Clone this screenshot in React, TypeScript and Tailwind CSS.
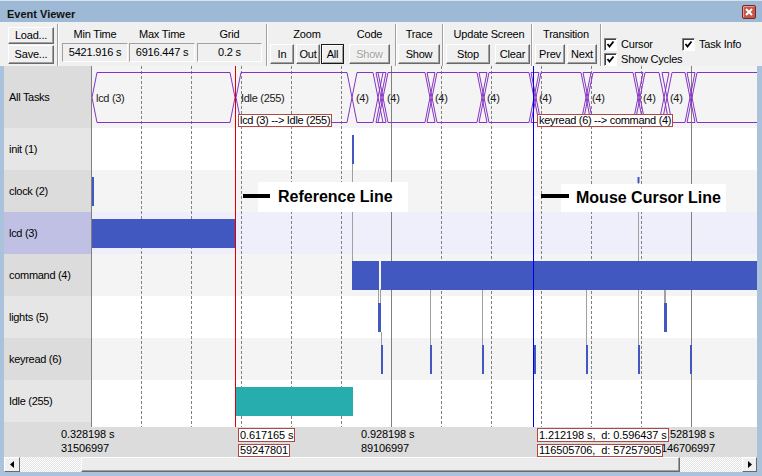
import type { ReactNode } from "react";

const BAR = "#4158c0";
const TEAL = "#27adad";
const PURPLE = "#8433c4";
const FONT = "Liberation Sans, Arial, sans-serif";

type Row = { name: string; h: string; label: string; chart: string };

const rows: Row[] = [
  { name: "All Tasks", h: "h-[62px]", label: "bg-[#dcdcdc]", chart: "bg-[#f4f4f4]" },
  { name: "init (1)", h: "h-[42px]", label: "bg-[#e6e6e6]", chart: "bg-white" },
  { name: "clock (2)", h: "h-[42px]", label: "bg-[#dcdcdc]", chart: "bg-[#f4f4f4]" },
  { name: "lcd (3)", h: "h-[42px]", label: "bg-[#c0c0e4]", chart: "bg-[#efeffb]" },
  { name: "command (4)", h: "h-[42px]", label: "bg-[#dcdcdc]", chart: "bg-[#f4f4f4]" },
  { name: "lights (5)", h: "h-[42px]", label: "bg-[#e6e6e6]", chart: "bg-white" },
  { name: "keyread (6)", h: "h-[42px]", label: "bg-[#dcdcdc]", chart: "bg-[#f4f4f4]" },
  { name: "Idle (255)", h: "h-[42px]", label: "bg-[#e6e6e6]", chart: "bg-white" },
];

// task segments on the "All Tasks" strip, page x coordinates
const segments: [number, number][] = [
  [92, 235], [236, 352], [352, 378], [378, 381], [381, 383], [383, 430],
  [430, 432], [432, 482], [482, 484], [484, 534], [534, 536], [536, 586],
  [586, 588], [588, 638], [638, 640], [640, 664], [664, 667], [667, 690],
  [690, 692], [692, 790],
];

const segLabels: [number, string][] = [
  [96, "lcd (3)"], [241, "Idle (255)"], [356, "(4)"], [387, "(4)"], [435, "(4)"],
  [487, "(4)"], [539, "(4)"], [592, "(4)"], [643, "(4)"], [670, "(4)"],
];

const bars: { x: number; y: number; w: number; h: number; c: string }[] = [
  { x: 352, y: 135, w: 2, h: 29, c: BAR },
  { x: 92, y: 177, w: 2, h: 29, c: BAR },
  { x: 637.5, y: 177, w: 2, h: 6, c: BAR },
  { x: 92, y: 219, w: 144, h: 29, c: BAR },
  { x: 352, y: 261, w: 27, h: 29, c: BAR },
  { x: 381, y: 261, w: 376, h: 29, c: BAR },
  { x: 378, y: 303, w: 3, h: 29, c: BAR },
  { x: 664, y: 303, w: 3, h: 29, c: BAR },
  ...[381, 430, 482, 534, 586, 638, 690].map((x) => ({ x, y: 345, w: 2, h: 29, c: BAR })),
  { x: 236, y: 387, w: 117, h: 29, c: TEAL },
];

const links: [number, number, number, number][] = [
  [352.5, 164, 261, 1], [378.5, 289, 303, 1], [380.5, 289, 303, 1], [381.5, 332, 345, 1],
  [430.5, 289, 345, 1], [482.5, 289, 345, 1], [586.5, 289, 345, 1], [638.5, 183, 261, 1],
  [638.5, 289, 345, 1], [665, 289, 303, 2],
];

const minorGrid = [141, 191, 241, 291, 341, 441, 491, 541, 591, 641];

const hex = (x0: number, x1: number) =>
  `M${x0 + 5} 72.5 L${x1 - 5} 72.5 L${x1} 97.5 L${x1 - 5} 122.5 L${x0 + 5} 122.5 L${x0} 97.5 Z`;

function Button({
  w,
  h = "h-[20px]",
  pressed,
  disabled,
  children,
}: {
  w: string;
  h?: string;
  pressed?: boolean;
  disabled?: boolean;
  children: ReactNode;
}) {
  return (
    <div
      className={`${w} ${h} flex shrink-0 items-center justify-center bg-[#f0f0f0] text-[11px] leading-none ${
        pressed
          ? "border border-[#1a1a1a] shadow-[inset_1px_1px_0_#fff,inset_-1px_-1px_0_#a0a0a0]"
          : "border border-t-white border-l-white border-r-[#696969] border-b-[#696969] shadow-[inset_-1px_-1px_0_#a0a0a0]"
      } ${disabled ? "text-[#a0a0a0] [text-shadow:1px_1px_0_#fff]" : "text-black"}`}
    >
      {children}
    </div>
  );
}

function Sep() {
  return <div className="mt-[2px] w-[2px] shrink-0 border-l border-r border-l-[#a0a0a0] border-r-white" />;
}

function GroupLabel({ children }: { children: ReactNode }) {
  return <div className="h-[13px] whitespace-nowrap text-center text-[11px] leading-[13px]">{children}</div>;
}

function ValueBox({ label, value, w }: { label: string; value: string; w: string }) {
  return (
    <div className={`${w} flex flex-col pt-[6px]`}>
      <GroupLabel>{label}</GroupLabel>
      <div className="mt-[2px] flex h-[19px] items-center justify-center border border-t-[#a0a0a0] border-l-[#a0a0a0] border-b-white border-r-white text-[11px]">
        {value}
      </div>
    </div>
  );
}

function Check({ label }: { label: string }) {
  return (
    <div className="flex h-[13px] items-center gap-[4px] text-[11px]">
      <div className="flex h-[13px] w-[13px] items-center justify-center border border-t-[#808080] border-l-[#808080] border-b-white border-r-white bg-white shadow-[inset_1px_1px_0_#404040]">
        <svg width="9" height="9" viewBox="0 0 9 9">
          <polyline points="1.5,4 3.5,6.5 7.5,1.5" fill="none" stroke="#000" strokeWidth="1.8" />
        </svg>
      </div>
      <span className="whitespace-nowrap">{label}</span>
    </div>
  );
}

function Toolbar() {
  return (
    <div className="flex h-[44px] bg-[#f0f0f0] tracking-[-0.2px] text-black">
      <div className="flex w-[57px] shrink-0 flex-col gap-[1px] pl-[8px] pt-[5px]">
        <Button w="w-[46px]" h="h-[17px]">Load...</Button>
        <Button w="w-[46px]" h="h-[19px]">Save...</Button>
      </div>
      <Sep />
      <div className="flex w-[207px] shrink-0 pl-[3px]">
        <ValueBox label="Min Time" value="5421.916 s" w="w-[66px]" />
        <div className="w-[1px]" />
        <ValueBox label="Max Time" value="6916.447 s" w="w-[66px]" />
        <div className="w-[2px]" />
        <ValueBox label="Grid" value="0.2 s" w="w-[65px]" />
      </div>
      <Sep />
      <div className="flex w-[127px] shrink-0 pl-[2px] pt-[6px]">
        <div className="flex w-[74px] flex-col">
          <GroupLabel>Zoom</GroupLabel>
          <div className="mt-[3px] flex">
            <Button w="w-[24px]">In</Button>
            <div className="w-[2px]" />
            <Button w="w-[24px]">Out</Button>
            <div className="w-[1px]" />
            <Button w="w-[23px]" pressed>All</Button>
          </div>
        </div>
        <div className="ml-[5px] flex w-[41px] flex-col">
          <GroupLabel>Code</GroupLabel>
          <div className="mt-[3px] flex">
            <Button w="w-[41px]" disabled>Show</Button>
          </div>
        </div>
      </div>
      <Sep />
      <div className="flex w-[45px] shrink-0 flex-col pl-[1px] pt-[6px]">
        <div className="w-[42px]">
          <GroupLabel>Trace</GroupLabel>
        </div>
        <div className="mt-[3px] flex">
          <Button w="w-[42px]">Show</Button>
        </div>
      </div>
      <Sep />
      <div className="flex w-[87px] shrink-0 flex-col pl-[2px] pt-[6px]">
        <div className="w-[86px]">
          <GroupLabel>Update Screen</GroupLabel>
        </div>
        <div className="mt-[3px] flex">
          <Button w="w-[44px]">Stop</Button>
          <div className="w-[5px]" />
          <Button w="w-[35px]">Clear</Button>
        </div>
      </div>
      <Sep />
      <div className="flex w-[67px] shrink-0 flex-col pl-[2px] pt-[6px]">
        <div className="w-[62px]">
          <GroupLabel>Transition</GroupLabel>
        </div>
        <div className="mt-[3px] flex">
          <Button w="w-[30px]">Prev</Button>
          <div className="w-[2px]" />
          <Button w="w-[30px]">Next</Button>
        </div>
      </div>
      <Sep />
      <div className="flex flex-1 flex-col gap-[2px] pl-[2px] pt-[16px]">
        <div className="flex">
          <div className="w-[78px]">
            <Check label="Cursor" />
          </div>
          <Check label="Task Info" />
        </div>
        <Check label="Show Cycles" />
      </div>
    </div>
  );
}

function ChartDrawing() {
  return (
    <svg className="absolute left-0 top-0" width={665} height={361} viewBox="92 66 665 361">
      {minorGrid.map((x) => (
        <line key={x} x1={x + 0.5} x2={x + 0.5} y1={66} y2={427} stroke="#808080" strokeDasharray="3 2" />
      ))}
      {[391.5, 691.5].map((x) => (
        <line key={x} x1={x} x2={x} y1={66} y2={427} stroke="#808080" />
      ))}
      {links.map(([x, y1, y2, w], i) => (
        <line key={i} x1={x} x2={x} y1={y1} y2={y2} stroke="#a0a0a0" strokeWidth={w} />
      ))}
      {bars.map((b, i) => (
        <rect key={i} x={b.x} y={b.y} width={b.w} height={b.h} fill={b.c} />
      ))}
      {segments.map(([a, b], i) => (
        <path key={i} d={hex(a, b)} fill="none" stroke={PURPLE} strokeWidth={1} />
      ))}
      {segLabels.map(([x, t]) => (
        <text
          key={x}
          x={x}
          y={98}
          dominantBaseline="central"
          fontSize={11}
          fontFamily={FONT}
          letterSpacing={-0.3}
          fill="#1a1a1a"
        >
          {t}
        </text>
      ))}
      <line x1={235.5} x2={235.5} y1={66} y2={427} stroke="#e00000" />
      <line x1={533.5} x2={533.5} y1={66} y2={427} stroke="#0000e8" />
    </svg>
  );
}

export default function App() {
  return (
    <div className="flex h-[476px] w-[762px] flex-col overflow-hidden bg-[#aac2dc] font-['Liberation_Sans',Arial,sans-serif] text-black">
      {/* title bar */}
      <div className="flex h-[22px] shrink-0 items-start justify-between border-t border-t-[#d6e2ee] bg-[#9db9d6] pl-[7px] pr-[6px]">
        <span className="pt-[5px] text-[11px] font-bold leading-[16px] text-[#111]">Event Viewer</span>
        <div className="mt-[4px] flex h-[14px] w-[14px] items-center justify-center rounded-[2px] border border-[#6b2a22] bg-[#c9564c] shadow-[inset_1px_1px_0_#e69a90]">
          <svg width="8" height="8" viewBox="0 0 8 8">
            <path d="M1 1 L7 7 M7 1 L1 7" stroke="#fff" strokeWidth="2" />
          </svg>
        </div>
      </div>

      <Toolbar />

      {/* chart body inside the blue frame */}
      <div className="flex flex-1 flex-col pb-[4px] pl-[4px] pr-[5px] tracking-[-0.3px]">
        <div className="flex h-[361px]">
          <div className="flex w-[88px] flex-col border-r border-r-[#808080]">
            {rows.map((r) => (
              <div key={r.name} className={`${r.h} ${r.label} flex items-center pl-[5px] text-[11px]`}>
                {r.name}
              </div>
            ))}
            <div className="flex-1 bg-[#dcdcdc]" />
          </div>
          <div className="relative w-[665px]">
            <div className="flex h-full flex-col">
              {rows.map((r, i) => (
                <div key={r.name} className={`${i === rows.length - 1 ? "flex-1" : r.h} ${r.chart}`} />
              ))}
            </div>
            <ChartDrawing />
            {/* transition info */}
            <div className="absolute left-[146px] top-[48px] h-[13px] whitespace-pre border border-[#b04848] bg-white px-[1px] text-[11px] leading-[11px]">
              lcd (3) --&gt; Idle (255)
            </div>
            <div className="absolute left-[445px] top-[48px] h-[13px] whitespace-pre border border-[#b04848] bg-white px-[1px] text-[11px] leading-[11px]">
              keyread (6) --&gt; command (4)
            </div>
            {/* callouts */}
            <div className="absolute left-[166px] top-[116px] flex h-[30px] w-[150px] items-center whitespace-nowrap bg-white pl-[20px] text-[16px] font-bold tracking-[0px]">
              Reference Line
            </div>
            <div className="absolute left-[151px] top-[128px] h-[4px] w-[27px] bg-black" />
            <div className="absolute left-[469px] top-[118px] flex h-[28px] w-[165px] items-center whitespace-nowrap bg-white pl-[15px] text-[16px] font-bold tracking-[0px]">
              Mouse Cursor Line
            </div>
            <div className="absolute left-[443px] top-[130px] h-[3px] w-[4px] bg-white" />
            <div className="absolute left-[449px] top-[128px] h-[4px] w-[28px] bg-black" />
          </div>
        </div>

        {/* time axis */}
        <div className="relative h-[30px] bg-[#dcdcdc] text-[11px] leading-[13px] tracking-[-0.1px]">
          <span className="absolute left-[57px] top-[1px]">0.328198 s</span>
          <span className="absolute left-[57px] top-[15px]">31506997</span>
          <span className="absolute left-[357px] top-[1px]">0.928198 s</span>
          <span className="absolute left-[357px] top-[15px]">89106997</span>
          <span className="absolute left-[657px] top-[1px]">1.528198 s</span>
          <span className="absolute left-[657px] top-[15px]">146706997</span>
          <div className="absolute left-[234px] top-[1px] h-[14px] border border-[#b04848] bg-white px-[1px] leading-[12px]">
            0.617165 s
          </div>
          <div className="absolute left-[234px] top-[17px] h-[13px] border border-[#b04848] bg-white px-[1px] leading-[11px]">
            59247801
          </div>
          <div className="absolute left-[533px] top-[1px] h-[14px] whitespace-pre border border-[#b04848] bg-white px-[1px] leading-[12px]">
            1.212198 s,  d: 0.596437 s
          </div>
          <div className="absolute left-[533px] top-[17px] h-[13px] whitespace-pre border border-[#b04848] bg-white px-[1px] leading-[11px]">
            116505706,  d: 57257905
          </div>
        </div>

        {/* horizontal scrollbar */}
        <div className="flex h-[15px] bg-[#f0f0f0]">
          <div className="flex w-[16px] items-center justify-center border border-t-white border-l-white border-r-[#696969] border-b-[#696969] bg-[#f0f0f0]">
            <svg width="4" height="7" viewBox="0 0 4 7">
              <path d="M4 0 L0 3.5 L4 7 Z" fill="#000" />
            </svg>
          </div>
          <div className="w-[61px] [background:repeating-conic-gradient(#fff_0_25%,#e2e2e2_0_50%)_0_0/2px_2px]" />
          <div className="flex-1 border border-t-white border-l-white border-r-[#696969] border-b-[#696969] bg-[#ececec] shadow-[inset_-1px_-1px_0_#a0a0a0]" />
          <div className="w-[62px] [background:repeating-conic-gradient(#fff_0_25%,#e2e2e2_0_50%)_0_0/2px_2px]" />
          <div className="flex w-[15px] items-center justify-center border border-t-white border-l-white border-r-[#696969] border-b-[#696969] bg-[#f0f0f0]">
            <svg width="4" height="7" viewBox="0 0 4 7">
              <path d="M0 0 L4 3.5 L0 7 Z" fill="#000" />
            </svg>
          </div>
        </div>
      </div>
    </div>
  );
}
